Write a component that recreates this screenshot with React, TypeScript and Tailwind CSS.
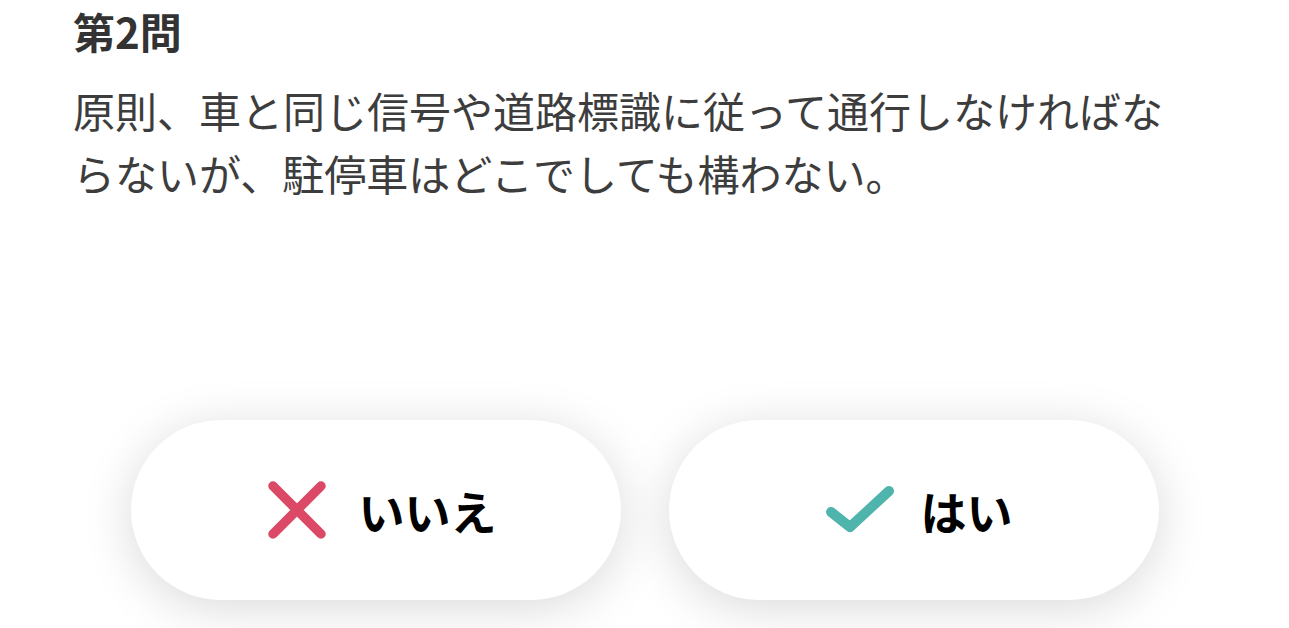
const font = { fontFamily: '"Noto Sans CJK JP", "Noto Sans", sans-serif' };

function XIcon() {
  return (
    <svg width="64" height="64" viewBox="0 0 64 64" fill="none">
      <path d="M8 8 L56 56 M56 8 L8 56" stroke="#db4966" strokeWidth="9.5" strokeLinecap="round" />
    </svg>
  );
}

function CheckIcon() {
  return (
    <svg width="70" height="50" viewBox="0 0 70 50" fill="none">
      <path d="M6 27 L25 42 L64 6" stroke="#4fb4ab" strokeWidth="10" strokeLinecap="round" strokeLinejoin="round" />
    </svg>
  );
}

export default function App() {
  return (
    <div className="w-[1289px] h-[628px] bg-white overflow-hidden" style={font}>
      <div className="px-[73px] pt-[1px]">
        <h2 className="text-[42px] font-bold leading-[60px] text-[#333333]">第2問</h2>
        <p className="mt-[17px] max-w-[1100px] text-[42px] leading-[63px] text-[#3d3d3d]">
          原則、車と同じ信号や道路標識に従って通行しなければならないが、駐停車はどこでしても構わない。
        </p>
      </div>
      <div className="mt-[216px] flex justify-center gap-[48px]">
        <button className="w-[490px] h-[180px] pl-[10px] rounded-full bg-white shadow-[0_8px_50px_rgba(0,0,0,0.15)] flex items-center justify-center gap-[30px]">
          <XIcon />
          <span className="text-[46px] font-bold text-black">いいえ</span>
        </button>
        <button className="w-[490px] h-[180px] pl-[10px] rounded-full bg-white shadow-[0_8px_50px_rgba(0,0,0,0.15)] flex items-center justify-center gap-[26px]">
          <CheckIcon />
          <span className="text-[46px] font-bold text-black">はい</span>
        </button>
      </div>
    </div>
  );
}
